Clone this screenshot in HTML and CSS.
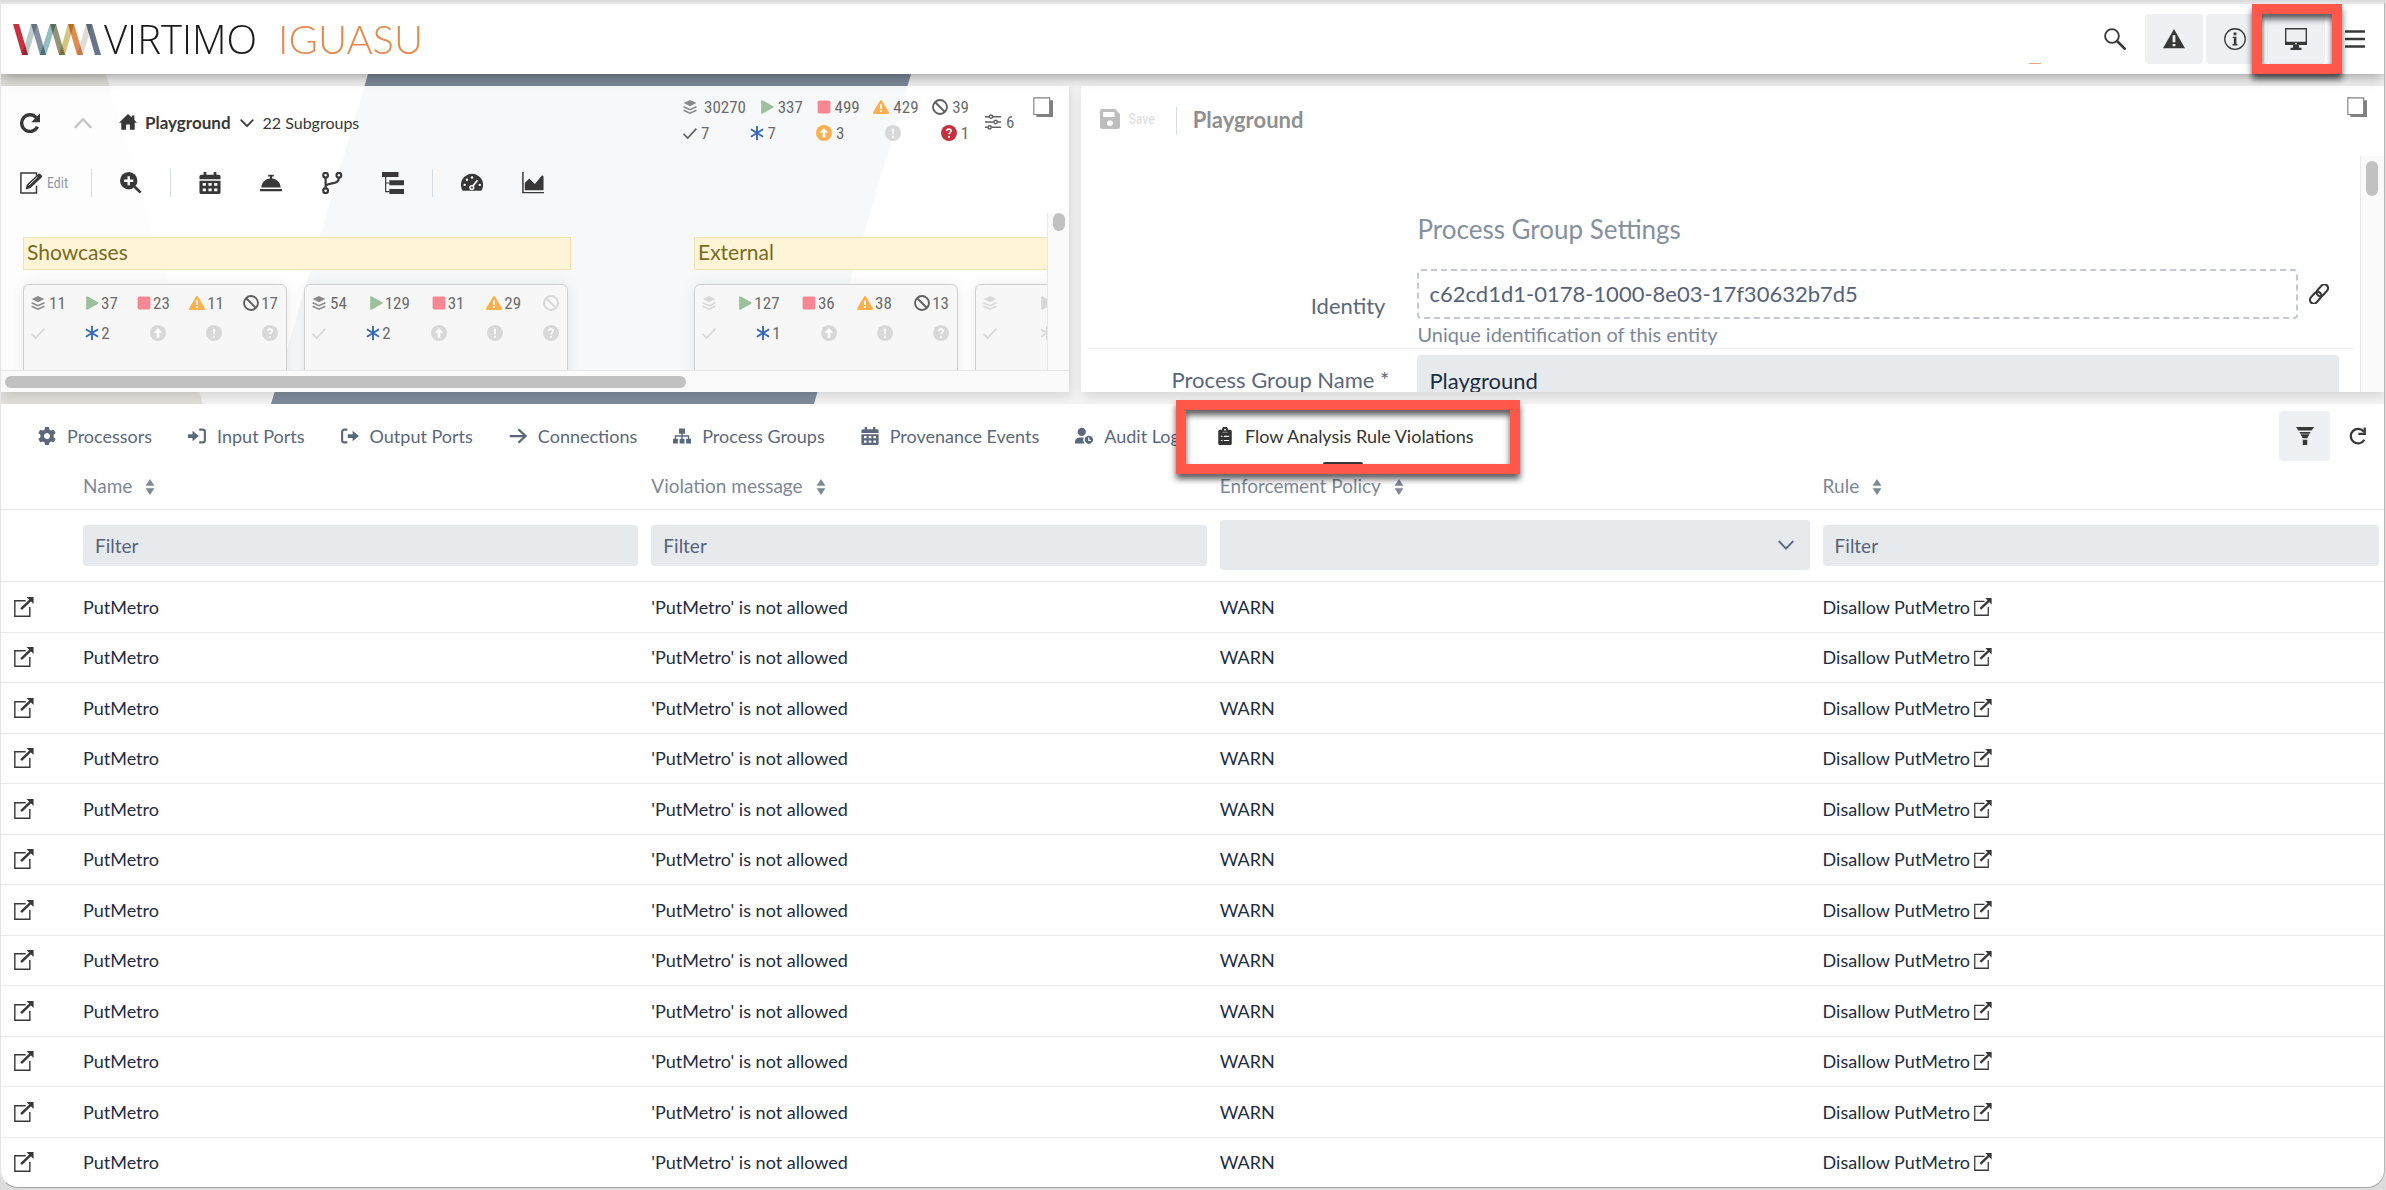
FILE: index.html
```html
<!DOCTYPE html>
<html lang="en">
<head>
<meta charset="utf-8">
<title>Virtimo IGUASU</title>
<link rel="stylesheet" href="styles.css">
</head>
<body>
<svg class="sprite" aria-hidden="true">
  <symbol id="i-refresh" viewBox="0 0 24 24"><path d="M21 16.500A10 10 0 1 1 19.500 5.500" fill="none" stroke="currentColor" stroke-width="4"/><path d="M24 .5v10.500H13.500l3.500-3.500 3.500-3.500z"/></symbol>
  <symbol id="i-refresh-thin" viewBox="0 0 24 24"><path d="M20.500 17A9.700 9.700 0 1 1 20 6.500" fill="none" stroke="currentColor" stroke-width="3"/><path d="M21 .5v8.500h-8.500" fill="none" stroke="currentColor" stroke-width="3"/></symbol>
  <symbol id="i-up" viewBox="0 0 24 24"><path d="M2 17.500 12 7l10 10.500" fill="none" stroke="currentColor" stroke-width="3" stroke-linecap="round"/></symbol>
  <symbol id="i-down" viewBox="0 0 24 24"><path d="M2 7l10 10.500L22 7" fill="none" stroke="currentColor" stroke-width="3" stroke-linecap="round" stroke-linejoin="round"/></symbol>
  <symbol id="i-home" viewBox="0 0 24 24"><path d="M12 0 0 11.500h3V21h6.500v-7h5v7H21v-9.500h3l-3.500-3.400V2H17v2.800z"/></symbol>
  <symbol id="i-edit" viewBox="0 0 24 24"><path d="M18 15v8H1V1h17v3" fill="none" stroke="currentColor" stroke-width="1.600"/><path d="M6 19l1.500-5.500L19.500 2.500c1-1 2-1 3 0l.8.8c1 1 1 2 0 3L11.500 17.500z"/><path d="M9.500 14.500 19 5.500" stroke="#fff" stroke-width="1"/></symbol>
  <symbol id="i-zoom" viewBox="0 0 24 24"><circle cx="9.500" cy="9.500" r="9.500"/><path d="M16 16l6.500 6.500" stroke="currentColor" stroke-width="3"/><path d="M9.500 4.500v10M4.500 9.500h10" stroke="#fff" stroke-width="2.600"/></symbol>
  <symbol id="i-calendar" viewBox="0 0 24 24"><path d="M5 0h3v3h8V0h3v3h2.500a2 2 0 0 1 2 2v3H.5V5a2 2 0 0 1 2-2H5z"/><path fill-rule="evenodd" d="M.5 9.500h23V22a2 2 0 0 1-2 2h-19a2 2 0 0 1-2-2zM4 12v3h3.500v-3zm6.300 0v3h3.500v-3zm6.200 0v3H20v-3zM4 18v3h3.500v-3zm6.300 0v3h3.500v-3zm6.200 0v3H20v-3z"/></symbol>
  <symbol id="i-bell" viewBox="0 0 24 24"><path d="M1.500 17C1.500 11 6 7.500 10.800 7V5H9V3h6v2h-1.800v2C18 7.500 22.500 11 22.500 17zM0 18.500h24V21H0z"/></symbol>
  <symbol id="i-branch" viewBox="0 0 24 24"><g fill="none" stroke="currentColor" stroke-width="2.400"><circle cx="5" cy="3.500" r="2.600"/><circle cx="5" cy="20.500" r="2.600"/><circle cx="19.500" cy="3.500" r="2.600"/><path d="M5 6v12M19.500 6c0 8-9 5-14 8.500"/></g></symbol>
  <symbol id="i-tree" viewBox="0 0 24 24"><path d="M0 0h18v5.500H0zM8 9h16v5.500H8zM8 18.500h16V24H8z"/><path d="M4 5v16.500h4M4 12h4" fill="none" stroke="currentColor" stroke-width="1.300"/></symbol>
  <symbol id="i-gauge" viewBox="0 0 24 24"><path d="M12 2a12 12 0 0 0-11 17c.4 1 1 1.500 2 1.500h18c1 0 1.600-.5 2-1.500A12 12 0 0 0 12 2z"/><path d="M12 16.500l6-7.500" stroke="#fff" stroke-width="1.800"/><circle cx="11.800" cy="17" r="2.800" fill="#fff"/><circle cx="11.800" cy="17" r="1.200"/><g fill="#fff"><circle cx="4" cy="14" r="1.300"/><circle cx="6.500" cy="8.500" r="1.300"/><circle cx="12" cy="6" r="1.300"/><circle cx="20.500" cy="14" r="1.300"/></g></symbol>
  <symbol id="i-chart" viewBox="0 0 24 24"><path d="M1 0v22.500h23" fill="none" stroke="currentColor" stroke-width="1.600"/><path d="M3 20v-8l5-5 6 6 8-9.500 1.500 1.500v15z"/></symbol>
  <symbol id="i-layers" viewBox="0 0 24 24"><path d="M12 0l11 5-11 5.500L1 5z"/><path d="M1 11.500l11 5 11-5M1 17.500l11 5 11-5" fill="none" stroke="currentColor" stroke-width="2.600"/></symbol>
  <symbol id="i-play" viewBox="0 0 24 24"><path d="M2 1.500c0-1 1-1.500 2-1l18.500 10.300c1 .6 1 1.800 0 2.400L4 23.500c-1 .5-2 0-2-1z"/></symbol>
  <symbol id="i-stop" viewBox="0 0 24 24"><rect x="1" y="1" width="22" height="22" rx="3"/></symbol>
  <symbol id="i-warn" viewBox="0 0 24 24"><path d="M10.400 2.500c.7-1.300 2.500-1.300 3.200 0l10 17c.8 1.300-.1 3-1.600 3H2c-1.500 0-2.400-1.700-1.600-3z"/><path d="M12 8v7M12 17v2.600" stroke="#fff" stroke-width="2.600"/></symbol>
  <symbol id="i-ban" viewBox="0 0 24 24"><circle cx="12" cy="12" r="10.500" fill="none" stroke="currentColor" stroke-width="2.800"/><path d="M4.500 4.500l15 15" stroke="currentColor" stroke-width="2.800"/></symbol>
  <symbol id="i-check" viewBox="0 0 24 24"><path d="M1 13.500l7 7L23 4.500" fill="none" stroke="currentColor" stroke-width="2.800"/></symbol>
  <symbol id="i-asterisk" viewBox="0 0 24 24"><path d="M12 0v24M1.500 5.500l21 13M22.500 5.500l-21 13" stroke="currentColor" stroke-width="3.200"/></symbol>
  <symbol id="i-arrowup" viewBox="0 0 24 24"><circle cx="12" cy="12" r="12"/><path d="M12 19v-9" stroke="#fff" stroke-width="4"/><path d="M12 4.500l6.500 7h-13z" fill="#fff"/></symbol>
  <symbol id="i-excl" viewBox="0 0 24 24"><circle cx="12" cy="12" r="12"/><path d="M12 5.500v8M12 16v3" stroke="#fff" stroke-width="2.800"/></symbol>
  <symbol id="i-quest" viewBox="0 0 24 24"><circle cx="12" cy="12" r="12"/><path d="M8.500 9c.3-4 7-3.500 6.800 0-.2 2.500-3.300 2.300-3.300 5" fill="none" stroke="#fff" stroke-width="2.400"/><path d="M12 16.500v2.800" stroke="#fff" stroke-width="2.800"/></symbol>
  <symbol id="i-sliders" viewBox="0 0 24 24"><path d="M0 4h6m6 0h12M0 12h13m6 0h5M0 20h4m6 0h14" stroke="currentColor" stroke-width="2.200"/><g fill="none" stroke="currentColor" stroke-width="2.200"><circle cx="9" cy="4" r="2.500"/><circle cx="16" cy="12" r="2.500"/><circle cx="7" cy="20" r="2.500"/></g></symbol>
  <symbol id="i-window" viewBox="0 0 24 24"><path d="M4 4h20v20H4z" fill="#808080"/><path d="M1 1h19v20H1z" fill="#fff" stroke="#808080" stroke-width="1.400"/></symbol>
  <symbol id="i-save" viewBox="0 0 24 24"><path fill-rule="evenodd" d="M3 0h15l6 6v15a3 3 0 0 1-3 3H3a3 3 0 0 1-3-3V3a3 3 0 0 1 3-3zm.8 3.500V9.500h13.700V3.500zM12 13.500a3.600 3.600 0 1 0 .01 0z"/></symbol>
  <symbol id="i-link" viewBox="0 0 24 24"><g fill="none" stroke="currentColor" stroke-width="2.600" transform="rotate(-48 12 12)"><rect x="-2" y="7.500" width="16" height="9" rx="4.500"/><rect x="10" y="7.500" width="16" height="9" rx="4.500"/></g></symbol>
  <symbol id="i-gear" viewBox="0 0 24 24"><path fill-rule="evenodd" d="M9.500 0h5l.7 3.500 2.300 1.300L21 3.600l2.500 4.300-2.700 2.400v3.400l2.700 2.400-2.500 4.300-3.500-1.200-2.300 1.300-.7 3.500h-5l-.7-3.500-2.300-1.300L3 20.400.5 16.100l2.700-2.400v-3.400L.5 7.900 3 3.600l3.500 1.200 2.300-1.300zM12 8a4 4 0 1 0 .01 0z"/></symbol>
  <symbol id="i-in" viewBox="0 0 24 24"><path d="M0 9.500h6V5l8.500 7L6 19v-4.500H0z"/><path d="M15 3.500h4.500a3 3 0 0 1 3 3v11a3 3 0 0 1-3 3H15" fill="none" stroke="currentColor" stroke-width="2.800"/></symbol>
  <symbol id="i-out" viewBox="0 0 24 24"><path d="M9 9.500h6.500V5l8.500 7-8.500 7v-4.500H9z"/><path d="M8.500 3.500H4.500a3 3 0 0 0-3 3v11a3 3 0 0 0 3 3h4" fill="none" stroke="currentColor" stroke-width="2.800"/></symbol>
  <symbol id="i-arrow" viewBox="0 0 24 24"><path d="M1 12h21M12.500 3l9.500 9-9.500 9" fill="none" stroke="currentColor" stroke-width="3"/></symbol>
  <symbol id="i-sitemap" viewBox="0 0 24 24"><path d="M8 2h8v7H8zM0 15.500h6.500V22H0zM8.800 15.500h6.500V22H8.800zM17.500 15.500H24V22h-6.500z"/><path d="M12 8v8M3.200 16v-4h17.600v4" fill="none" stroke="currentColor" stroke-width="1.800"/></symbol>
  <symbol id="i-audit" viewBox="0 0 24 24"><circle cx="9" cy="6.500" r="5.500"/><path d="M0 22v-2c0-4 3-6 6-6h5.500c-1 3-.5 6 1.500 8z"/><path fill-rule="evenodd" d="M18.500 11.500a5.500 5.500 0 1 0 .01 0zM17.600 14h1.600v3l2 .3v1.500h-3.600z"/></symbol>
  <symbol id="i-clip" viewBox="0 0 24 24"><path d="M8 3.500a4 4 0 0 1 8 0h3a2 2 0 0 1 2 2V22a2 2 0 0 1-2 2H5a2 2 0 0 1-2-2V5.500a2 2 0 0 1 2-2z"/><path d="M6.500 12.500h2m2 0h7M6.500 18h2m2 0h7" stroke="#fff" stroke-width="1.600"/><path d="M8.500 7h7" stroke="#aaa" stroke-width="1"/><circle cx="12" cy="3.500" r="1.200" fill="#fff"/></symbol>
  <symbol id="i-filter" viewBox="0 0 24 24"><path d="M0 0h24l-3.200 4.800H3.200zM4.400 6.500h15.200L18 9H6zM6 9.500h12l-3 5.500H9zM9 17h6v7H9z"/></symbol>
  <symbol id="i-ext" viewBox="0 0 24 24"><path d="M14 4.500H1V23h18V12" fill="none" stroke="currentColor" stroke-width="1.700"/><path d="M8.500 14.500 20 3.500" stroke="currentColor" stroke-width="3"/><path d="M15 0h8.500v8.500z"/></symbol>
  <symbol id="i-sort" viewBox="0 0 12 20"><path d="M6 0l5.500 8.500H.5zM6 20l5.500-8.500H.5z"/></symbol>
  <symbol id="i-search" viewBox="0 0 24 24"><circle cx="8.700" cy="8.700" r="7.500" fill="none" stroke="currentColor" stroke-width="2"/><path d="M14.500 14.500l8 8" stroke="currentColor" stroke-width="3" stroke-linecap="round"/></symbol>
  <symbol id="i-alert" viewBox="0 0 24 24"><path d="M12 1l12 21H0z"/><path d="M12 8v7.500M12 17.500V20" stroke="#eff0f4" stroke-width="3"/></symbol>
  <symbol id="i-info" viewBox="0 0 24 24"><circle cx="12" cy="12" r="11.200" fill="none" stroke="currentColor" stroke-width="1.400"/><path d="M10.500 5h3v3h-3zM9.500 9.500h4v8h1.200V19H9.300v-1.500h1.400V11H9.500z"/></symbol>
  <symbol id="i-monitor" viewBox="0 0 24 24"><path fill-rule="evenodd" d="M0 0h24v18.500h-9l.5 3H18V24H6v-2.500h2.500l.5-3H0zM1.500 1.500v13.500h21V1.500z"/><circle cx="12" cy="17" r="1" fill="#eff0f4"/></symbol>
  <symbol id="i-menu" viewBox="0 0 24 24"><path d="M1 3h22M1 12h22M1 21h22" stroke="currentColor" stroke-width="3" stroke-linecap="round"/></symbol>
</svg>

<div class="frame">
  <header class="topbar">
    <svg class="brand-mark" viewBox="0 0 88 31" aria-hidden="true">
      <path fill="#c8313f" d="M0 0h6l9 31H9z"/><path fill="#bccbce" d="M9 31h6L24 0h-6z"/><path fill="#8490a0" d="M18 0h6l9 31h-6z"/><path fill="#92bfbf" d="M27 31h6l10-31h-6z"/><path fill="#96917a" d="M37 0h6l9 31h-6z"/><path fill="#d2c77c" d="M46 31h6l9-31h-6z"/><path fill="#e28a52" d="M55 0h6l9 31h-6z"/><path fill="#dfdbd5" d="M64 31h6l9-31h-6z"/><path fill="#66758b" d="M73 0h6l9 31h-6z"/>
    </svg>
    <span class="brand-name">VIRTIMO</span>
    <span class="product-name">IGUASU</span>
    <span class="progress-hint"></span>
    <button class="plain-btn search-btn" aria-label="Search"><svg class="ic22"><use href="#i-search"/></svg></button>
    <div class="top-actions">
      <button class="tile-btn" aria-label="Alerts"><svg class="ic22"><use href="#i-alert"/></svg></button>
      <button class="tile-btn" aria-label="Information"><svg class="ic22"><use href="#i-info"/></svg></button>
      <button class="tile-btn marked" aria-label="Monitoring"><svg class="ic22"><use href="#i-monitor"/></svg><span class="marker marker-tile"></span></button>
    </div>
    <button class="plain-btn" aria-label="Menu"><svg class="ic20"><use href="#i-menu"/></svg></button>
  </header>

  <main class="workspace">
    <svg class="backdrop" width="920" height="330" viewBox="0 0 920 330" aria-hidden="true">
      <path fill="#e0dfd9" d="M0 0h105l97 330H0z"/><path fill="#7f8b9b" d="M367 0h543l-97 330H270z"/>
    </svg>

    <section class="flow-panel">
      <div class="flow-head">
        <div class="flow-tools">
          <nav class="crumbs">
            <button class="plain-btn" aria-label="Reload"><svg class="ic20"><use href="#i-refresh"/></svg></button>
            <button class="plain-btn faded up-btn" aria-label="Up"><svg class="ic18"><use href="#i-up"/></svg></button>
            <a class="crumb" href="#"><svg class="ic18"><use href="#i-home"/></svg>Playground</a>
            <button class="plain-btn crumb-more"><svg class="ic14"><use href="#i-down"/></svg>22 Subgroups</button>
          </nav>
          <div class="tools">
            <button class="plain-btn edit-btn"><svg class="ic22"><use href="#i-edit"/></svg><span>Edit</span></button>
            <span class="rule"></span>
            <button class="plain-btn" aria-label="Zoom in"><svg class="ic22"><use href="#i-zoom"/></svg></button>
            <span class="rule"></span>
            <div class="tool-set">
              <button class="plain-btn" aria-label="Calendar"><svg class="ic22"><use href="#i-calendar"/></svg></button>
              <button class="plain-btn" aria-label="Services"><svg class="ic22"><use href="#i-bell"/></svg></button>
              <button class="plain-btn" aria-label="Versions"><svg class="ic22"><use href="#i-branch"/></svg></button>
              <button class="plain-btn" aria-label="Hierarchy"><svg class="ic22"><use href="#i-tree"/></svg></button>
            </div>
            <span class="rule"></span>
            <div class="tool-set">
              <button class="plain-btn" aria-label="Gauge"><svg class="ic22"><use href="#i-gauge"/></svg></button>
              <button class="plain-btn" aria-label="Statistics"><svg class="ic22"><use href="#i-chart"/></svg></button>
            </div>
          </div>
        </div>
        <div class="summary">
          <div class="stats stats-wide">
            <div class="stat-row">
              <span class="stat spaced"><svg class="ic14 c-mid"><use href="#i-layers"/></svg>30270</span>
              <span class="stat"><svg class="ic14 c-green"><use href="#i-play"/></svg>337</span>
              <span class="stat"><svg class="ic14 c-pink"><use href="#i-stop"/></svg>499</span>
              <span class="stat"><svg class="ic16 c-amber"><use href="#i-warn"/></svg>429</span>
              <span class="stat"><svg class="ic16 c-dark"><use href="#i-ban"/></svg>39</span>
            </div>
            <div class="stat-row">
              <span class="stat"><svg class="ic14 c-dark"><use href="#i-check"/></svg>7</span>
              <span class="stat"><svg class="ic14 c-blue"><use href="#i-asterisk"/></svg>7</span>
              <span class="stat"><svg class="ic16 c-amber"><use href="#i-arrowup"/></svg>3</span>
              <span class="stat"><svg class="ic16 c-off"><use href="#i-excl"/></svg></span>
              <span class="stat"><svg class="ic16 c-red"><use href="#i-quest"/></svg>1</span>
            </div>
          </div>
          <span class="stat stat-side"><svg class="ic16 c-dark"><use href="#i-sliders"/></svg>6</span>
          <button class="plain-btn window-btn" aria-label="Detach flow"><svg class="ic20"><use href="#i-window"/></svg></button>
        </div>
      </div>
      <div class="flow-body">
        <div class="canvas">
          <div class="note note-a">Showcases</div>
          <div class="note note-b">External</div>
          <div class="group group-a stats">
            <div class="stat-row">
              <span class="stat spaced"><svg class="ic14 c-mid"><use href="#i-layers"/></svg>11</span>
              <span class="stat"><svg class="ic14 c-green"><use href="#i-play"/></svg>37</span>
              <span class="stat"><svg class="ic14 c-pink"><use href="#i-stop"/></svg>23</span>
              <span class="stat"><svg class="ic16 c-amber"><use href="#i-warn"/></svg>11</span>
              <span class="stat"><svg class="ic16 c-dark"><use href="#i-ban"/></svg>17</span>
            </div>
            <div class="stat-row">
              <span class="stat"><svg class="ic14 c-off"><use href="#i-check"/></svg></span>
              <span class="stat"><svg class="ic14 c-blue"><use href="#i-asterisk"/></svg>2</span>
              <span class="stat"><svg class="ic16 c-off"><use href="#i-arrowup"/></svg></span>
              <span class="stat"><svg class="ic16 c-off"><use href="#i-excl"/></svg></span>
              <span class="stat"><svg class="ic16 c-off"><use href="#i-quest"/></svg></span>
            </div>
          </div>
          <div class="group group-b stats">
            <div class="stat-row">
              <span class="stat spaced"><svg class="ic14 c-mid"><use href="#i-layers"/></svg>54</span>
              <span class="stat"><svg class="ic14 c-green"><use href="#i-play"/></svg>129</span>
              <span class="stat"><svg class="ic14 c-pink"><use href="#i-stop"/></svg>31</span>
              <span class="stat"><svg class="ic16 c-amber"><use href="#i-warn"/></svg>29</span>
              <span class="stat"><svg class="ic16 c-off"><use href="#i-ban"/></svg></span>
            </div>
            <div class="stat-row">
              <span class="stat"><svg class="ic14 c-off"><use href="#i-check"/></svg></span>
              <span class="stat"><svg class="ic14 c-blue"><use href="#i-asterisk"/></svg>2</span>
              <span class="stat"><svg class="ic16 c-off"><use href="#i-arrowup"/></svg></span>
              <span class="stat"><svg class="ic16 c-off"><use href="#i-excl"/></svg></span>
              <span class="stat"><svg class="ic16 c-off"><use href="#i-quest"/></svg></span>
            </div>
          </div>
          <div class="group group-c stats">
            <div class="stat-row">
              <span class="stat"><svg class="ic14 c-off"><use href="#i-layers"/></svg></span>
              <span class="stat"><svg class="ic14 c-green"><use href="#i-play"/></svg>127</span>
              <span class="stat"><svg class="ic14 c-pink"><use href="#i-stop"/></svg>36</span>
              <span class="stat"><svg class="ic16 c-amber"><use href="#i-warn"/></svg>38</span>
              <span class="stat"><svg class="ic16 c-dark"><use href="#i-ban"/></svg>13</span>
            </div>
            <div class="stat-row">
              <span class="stat"><svg class="ic14 c-off"><use href="#i-check"/></svg></span>
              <span class="stat"><svg class="ic14 c-blue"><use href="#i-asterisk"/></svg>1</span>
              <span class="stat"><svg class="ic16 c-off"><use href="#i-arrowup"/></svg></span>
              <span class="stat"><svg class="ic16 c-off"><use href="#i-excl"/></svg></span>
              <span class="stat"><svg class="ic16 c-off"><use href="#i-quest"/></svg></span>
            </div>
          </div>
          <div class="group group-d stats">
            <div class="stat-row">
              <span class="stat"><svg class="ic14 c-off"><use href="#i-layers"/></svg></span>
              <span class="stat"><svg class="ic14 c-off"><use href="#i-play"/></svg></span>
              <span class="stat"><svg class="ic14 c-off"><use href="#i-stop"/></svg></span>
              <span class="stat"><svg class="ic16 c-off"><use href="#i-warn"/></svg></span>
              <span class="stat"><svg class="ic16 c-off"><use href="#i-ban"/></svg></span>
            </div>
            <div class="stat-row">
              <span class="stat"><svg class="ic14 c-off"><use href="#i-check"/></svg></span>
              <span class="stat"><svg class="ic14 c-off"><use href="#i-asterisk"/></svg></span>
              <span class="stat"><svg class="ic16 c-off"><use href="#i-arrowup"/></svg></span>
              <span class="stat"><svg class="ic16 c-off"><use href="#i-excl"/></svg></span>
              <span class="stat"><svg class="ic16 c-off"><use href="#i-quest"/></svg></span>
            </div>
          </div>
        </div>
        <div class="vscroll"><span class="vthumb"></span></div>
        <div class="hscroll"><span class="hthumb"></span></div>
      </div>
    </section>

    <section class="settings-panel">
      <div class="settings-head">
        <button class="plain-btn save-btn" disabled><svg class="ic20"><use href="#i-save"/></svg><span>Save</span></button>
        <span class="rule"></span>
        <h2 class="settings-title">Playground</h2>
        <button class="plain-btn window-btn push" aria-label="Detach settings"><svg class="ic20"><use href="#i-window"/></svg></button>
      </div>
      <div class="settings-body">
        <form class="form">
          <h3 class="form-heading">Process Group Settings</h3>
          <div class="form-row">
            <label class="form-label" for="identity">Identity</label>
            <div class="form-field">
              <div class="field-line">
                <input class="identity-input" id="identity" readonly value="c62cd1d1-0178-1000-8e03-17f30632b7d5">
                <button type="button" class="plain-btn" aria-label="Copy link"><svg class="ic20"><use href="#i-link"/></svg></button>
              </div>
              <p class="hint">Unique identification of this entity</p>
            </div>
          </div>
          <div class="form-row bordered">
            <label class="form-label" for="group-name">Process Group Name *</label>
            <div class="form-field"><input class="name-input" id="group-name" value="Playground"></div>
          </div>
        </form>
        <div class="vscroll"><span class="vthumb vthumb-long"></span></div>
      </div>
    </section>
  </main>

  <section class="monitor">
    <div class="monitor-head">
      <nav class="tabs">
        <a class="tab" href="#"><svg class="ic18"><use href="#i-gear"/></svg>Processors</a>
        <a class="tab" href="#"><svg class="ic18"><use href="#i-in"/></svg>Input Ports</a>
        <a class="tab" href="#"><svg class="ic18"><use href="#i-out"/></svg>Output Ports</a>
        <a class="tab" href="#"><svg class="ic18"><use href="#i-arrow"/></svg>Connections</a>
        <a class="tab" href="#"><svg class="ic18"><use href="#i-sitemap"/></svg>Process Groups</a>
        <a class="tab" href="#"><svg class="ic18"><use href="#i-calendar"/></svg>Provenance Events</a>
        <a class="tab" href="#"><svg class="ic18"><use href="#i-audit"/></svg>Audit Log</a>
        <a class="tab active marked" href="#"><svg class="ic18"><use href="#i-clip"/></svg>Flow Analysis Rule Violations<span class="marker marker-tab"></span></a>
      </nav>
      <div class="monitor-actions">
        <button class="tile-btn tile-narrow" aria-label="Filter"><svg class="ic18"><use href="#i-filter"/></svg></button>
        <button class="plain-btn" aria-label="Reload table"><svg class="ic18"><use href="#i-refresh-thin"/></svg></button>
      </div>
    </div>
    <table class="grid">
      <colgroup><col class="col-open"><col><col><col class="col-policy"><col></colgroup>
      <thead>
        <tr class="head-row">
          <th></th>
          <th scope="col">Name<svg class="sort"><use href="#i-sort"/></svg></th>
          <th scope="col">Violation message<svg class="sort"><use href="#i-sort"/></svg></th>
          <th scope="col">Enforcement Policy<svg class="sort"><use href="#i-sort"/></svg></th>
          <th scope="col">Rule<svg class="sort"><use href="#i-sort"/></svg></th>
        </tr>
        <tr class="filter-row">
          <td></td>
          <td><input class="filter" placeholder="Filter" aria-label="Filter name"></td>
          <td><input class="filter" placeholder="Filter" aria-label="Filter violation message"></td>
          <td><div class="select-wrap"><select class="policy" aria-label="Enforcement policy"><option></option></select><svg class="ic16"><use href="#i-down"/></svg></div></td>
          <td><input class="filter" placeholder="Filter" aria-label="Filter rule"></td>
        </tr>
      </thead>
      <tbody>
        <tr><td><a href="#" aria-label="Open"><svg class="ic20"><use href="#i-ext"/></svg></a></td><td>PutMetro</td><td>'PutMetro' is not allowed</td><td>WARN</td><td><a class="rule-link" href="#">Disallow PutMetro<svg class="ic18"><use href="#i-ext"/></svg></a></td></tr>
        <tr><td><a href="#" aria-label="Open"><svg class="ic20"><use href="#i-ext"/></svg></a></td><td>PutMetro</td><td>'PutMetro' is not allowed</td><td>WARN</td><td><a class="rule-link" href="#">Disallow PutMetro<svg class="ic18"><use href="#i-ext"/></svg></a></td></tr>
        <tr><td><a href="#" aria-label="Open"><svg class="ic20"><use href="#i-ext"/></svg></a></td><td>PutMetro</td><td>'PutMetro' is not allowed</td><td>WARN</td><td><a class="rule-link" href="#">Disallow PutMetro<svg class="ic18"><use href="#i-ext"/></svg></a></td></tr>
        <tr><td><a href="#" aria-label="Open"><svg class="ic20"><use href="#i-ext"/></svg></a></td><td>PutMetro</td><td>'PutMetro' is not allowed</td><td>WARN</td><td><a class="rule-link" href="#">Disallow PutMetro<svg class="ic18"><use href="#i-ext"/></svg></a></td></tr>
        <tr><td><a href="#" aria-label="Open"><svg class="ic20"><use href="#i-ext"/></svg></a></td><td>PutMetro</td><td>'PutMetro' is not allowed</td><td>WARN</td><td><a class="rule-link" href="#">Disallow PutMetro<svg class="ic18"><use href="#i-ext"/></svg></a></td></tr>
        <tr><td><a href="#" aria-label="Open"><svg class="ic20"><use href="#i-ext"/></svg></a></td><td>PutMetro</td><td>'PutMetro' is not allowed</td><td>WARN</td><td><a class="rule-link" href="#">Disallow PutMetro<svg class="ic18"><use href="#i-ext"/></svg></a></td></tr>
        <tr><td><a href="#" aria-label="Open"><svg class="ic20"><use href="#i-ext"/></svg></a></td><td>PutMetro</td><td>'PutMetro' is not allowed</td><td>WARN</td><td><a class="rule-link" href="#">Disallow PutMetro<svg class="ic18"><use href="#i-ext"/></svg></a></td></tr>
        <tr><td><a href="#" aria-label="Open"><svg class="ic20"><use href="#i-ext"/></svg></a></td><td>PutMetro</td><td>'PutMetro' is not allowed</td><td>WARN</td><td><a class="rule-link" href="#">Disallow PutMetro<svg class="ic18"><use href="#i-ext"/></svg></a></td></tr>
        <tr><td><a href="#" aria-label="Open"><svg class="ic20"><use href="#i-ext"/></svg></a></td><td>PutMetro</td><td>'PutMetro' is not allowed</td><td>WARN</td><td><a class="rule-link" href="#">Disallow PutMetro<svg class="ic18"><use href="#i-ext"/></svg></a></td></tr>
        <tr><td><a href="#" aria-label="Open"><svg class="ic20"><use href="#i-ext"/></svg></a></td><td>PutMetro</td><td>'PutMetro' is not allowed</td><td>WARN</td><td><a class="rule-link" href="#">Disallow PutMetro<svg class="ic18"><use href="#i-ext"/></svg></a></td></tr>
        <tr><td><a href="#" aria-label="Open"><svg class="ic20"><use href="#i-ext"/></svg></a></td><td>PutMetro</td><td>'PutMetro' is not allowed</td><td>WARN</td><td><a class="rule-link" href="#">Disallow PutMetro<svg class="ic18"><use href="#i-ext"/></svg></a></td></tr>
        <tr><td><a href="#" aria-label="Open"><svg class="ic20"><use href="#i-ext"/></svg></a></td><td>PutMetro</td><td>'PutMetro' is not allowed</td><td>WARN</td><td><a class="rule-link" href="#">Disallow PutMetro<svg class="ic18"><use href="#i-ext"/></svg></a></td></tr>
      </tbody>
    </table>
  </section>
</div>
</body>
</html>
```
FILE: styles.css
```css
* { box-sizing: border-box; }
body {
  margin: 0;
  padding: 2px 1px 0 0;
  background: #dcdcdc;
  color: #1e2c42;
  font: 18px/24px Lato, sans-serif;
}
.sprite { display: none; }
svg { fill: currentColor; flex: none; display: block; }
a { color: inherit; text-decoration: none; }
input, select, button { font: inherit; color: inherit; }

.ic14 { width: 14px; height: 14px; }
.ic16 { width: 16px; height: 16px; }
.ic18 { width: 18px; height: 18px; }
.ic20 { width: 20px; height: 20px; }
.ic22 { width: 22px; height: 22px; }

.c-mid { color: #8a8a8a; }
.c-dark { color: #5f5f5f; }
.c-green { color: #9cc09b; }
.c-pink { color: #f78793; }
.c-amber { color: #ffb04e; }
.c-blue { color: #3568b8; }
.c-red { color: #c62f3e; }
.c-off { color: #d8d8d8; }

.frame {
  border: solid #e5e5e5;
  border-width: 2px 0 0 1px;
  border-right: 1px solid #b5b5b5;
  border-bottom: 1px solid #a5a5a5;
  border-radius: 0 0 18px 18px;
  background: #fff;
  overflow: hidden;
}

.plain-btn {
  display: flex;
  align-items: center;
  padding: 0;
  border: 0;
  background: none;
  color: #383838;
}
.tile-btn {
  display: flex;
  align-items: center;
  justify-content: center;
  width: 58px;
  height: 50px;
  padding: 0;
  border: 0;
  border-radius: 4px;
  background: #eff0f4;
  color: #383838;
}
.tile-narrow { width: 51px; }
.rule { width: 1px; height: 28px; background: #d5dbe3; }

/* Red call-out frames */
.marked { position: relative; }
.marker {
  position: absolute;
  z-index: 5;
  border: 10px solid #ff584a;
  filter: drop-shadow(0 5px 3px rgba(0, 0, 0, .65));
  pointer-events: none;
}
.marker-tile { inset: -10px -17px -10px -15px; }
.marker-tab { inset: -4px -28px -8px -22px; }

/* Top bar */
.topbar {
  position: relative;
  z-index: 2;
  display: flex;
  align-items: center;
  height: 70px;
  padding: 0 19px 0 12px;
  background: #fff;
  box-shadow: 0 3px 12px rgba(0, 0, 0, .35);
}
.brand-mark { width: 88px; height: 31px; }
.brand-mark path { mix-blend-mode: multiply; }
.brand-name {
  margin-left: 3px;
  color: #1a1a1a;
  font: 300 40px/50px "Open Sans", sans-serif;
}
.product-name {
  margin-left: 21px;
  color: #e58a4c;
  font: 300 40px/50px Lato, sans-serif;
}
.progress-hint {
  align-self: flex-end;
  width: 12px;
  height: 1px;
  margin: 0 63px 10px auto;
  background: #e9a57c;
}
.search-btn { margin-right: 19px; }
.top-actions { display: flex; gap: 3px; margin-right: 20px; }

/* Workspace */
.workspace {
  position: relative;
  display: grid;
  grid-template-columns: 1068fr 1302fr;
  gap: 12px;
  padding: 12px 0;
  background: #f3f3f3;
}
.backdrop { position: absolute; left: 0; top: 0; }
.flow-panel, .settings-panel {
  position: relative;
  display: flex;
  flex-direction: column;
  height: 306px;
  min-width: 0;
  background: #fff;
  box-shadow: 2px 4px 10px rgba(0, 0, 0, .12);
}
.flow-panel { background: rgba(255, 255, 255, .94); }

.flow-head { display: flex; justify-content: space-between; height: 127px; padding: 9px 16px 0 19px; }
.flow-tools { padding-top: 16px; color: #383838; }
.crumbs { display: flex; align-items: center; height: 24px; }
.up-btn { margin: 0 27px 0 34px; }
.faded { color: #c4c4c4; }
.crumb { display: flex; align-items: center; gap: 8px; font-size: 17px; font-weight: 700; }
.crumb-more { gap: 9px; margin-left: 9px; font-size: 16px; }
.tools { display: flex; align-items: center; gap: 28px; height: 28px; margin-top: 34px; }
.edit-btn { gap: 5px; margin-right: -5px; }
.edit-btn span { color: #8d99aa; font: 14px/20px "Roboto Condensed", "Liberation Sans Narrow", Roboto, sans-serif; }
.tool-set { display: flex; gap: 39px; }

.summary { display: flex; align-items: flex-start; }
.stats, .stat-side {
  color: #6b6b6b;
  font: 17px/20px "Roboto Condensed", "Liberation Sans Narrow", Roboto, sans-serif;
}
.stats-wide { width: 286px; padding-top: 2px; }
.stat-row { display: flex; align-items: center; justify-content: space-between; height: 20px; }
.stats-wide .stat-row + .stat-row { margin-top: 6px; }
.stat { display: flex; align-items: center; gap: 2px; }
.stats-wide .stat { gap: 4px; }
.stat.spaced { gap: 4px; }
.stats-wide .spaced { gap: 7px; }
.stat-side { gap: 5px; margin: 17px 19px 0 16px; }
.window-btn { margin-top: 2px; }

.flow-body {
  flex: 1;
  display: grid;
  grid-template: 1fr 22px / 1fr 22px;
  min-height: 0;
}
.canvas { position: relative; overflow: hidden; }
.vscroll { display: flex; justify-content: center; border-left: 1px solid #e8e8e8; background: #fafafa; }
.hscroll { grid-column: 1 / 3; display: flex; align-items: center; padding-left: 4px; border-top: 1px solid #e8e8e8; background: #fafafa; }
.vthumb { width: 12px; height: 18px; border-radius: 6px; background: #c1c1c1; }
.vthumb-long { height: 35px; margin-top: 5px; }
.hthumb { width: 64%; height: 12px; border-radius: 6px; background: #c1c1c1; }

.note {
  position: absolute;
  top: 24px;
  width: 548px;
  height: 33px;
  padding: 0 3px;
  border: 1px solid #f0e2b2;
  background: #fff5d6;
  color: #7a6a22;
  font-size: 21px;
  line-height: 27px;
}
.note-a { left: 22px; }
.note-b { left: 693px; }
.group {
  position: absolute;
  top: 71px;
  width: 264px;
  height: 160px;
  padding: 8px 8px 8px 7px;
  border: 1px solid #cfcfcf;
  border-radius: 6px;
  background: #f7f7f7;
  box-shadow: 0 0 14px rgba(0, 0, 0, .08);
}
.group .stat-row + .stat-row { margin-top: 10px; }
.group-a { left: 22px; }
.group-b { left: 303px; }
.group-c { left: 693px; }
.group-d { left: 974px; }

/* Settings */
.settings-head { display: flex; align-items: flex-start; height: 70px; padding: 9px 17px 0 19px; }
.settings-head .rule { margin: 12px 16px 0 21px; }
.save-btn { gap: 8px; height: 28px; margin-top: 10px; color: #bdbdbd; }
.save-btn span { color: #dcdcdc; font: 14px/20px "Roboto Condensed", "Liberation Sans Narrow", Roboto, sans-serif; }
.settings-title { margin: 11px 0 0; color: #8f8f8f; font-size: 22px; line-height: 28px; }
.push { margin-left: auto; }
.settings-body { flex: 1; display: grid; grid-template-columns: 1fr 24px; min-height: 0; overflow: hidden; }
.form { padding: 0 6px; overflow: hidden; }
.form-heading {
  margin: 55px 0 22px 330px;
  color: #8490a0;
  font-size: 26px;
  font-weight: 400;
  line-height: 36px;
}
.form-row { display: grid; grid-template-columns: 302px 1fr; gap: 28px; padding-right: 15px; }
.bordered { padding-top: 6px; border-top: 1px solid #eceef0; }
.form-label { color: #5b677b; font-size: 22px; line-height: 50px; text-align: right; }
.form-field { min-width: 0; }
.form-row:not(.bordered) .form-label { padding: 12px 4px 0 0; }
.field-line { display: flex; align-items: center; gap: 11px; padding-right: 10px; }
.identity-input, .name-input {
  flex: 1;
  width: 100%;
  height: 50px;
  padding: 0 12px;
  border: 2px dashed #c3c8d8;
  border-radius: 4px;
  background: #fff;
  color: #56627a;
  font-size: 22px;
}
.identity-input { padding: 0 10px 2px; }
.name-input { border: 0; background: #e6eaed; color: #1e2c42; }
.hint { margin: 3px 0 2px; color: #7d8899; font-size: 20px; line-height: 24px; }

/* Monitoring table */
.monitor-head { display: flex; justify-content: space-between; height: 62px; padding-right: 17px; }
.tabs { display: flex; padding-left: 19px; }
.tab { display: flex; align-items: center; gap: 11px; padding: 2px 18px 0; color: #5b677b; white-space: nowrap; }
.active { color: #333; }
.active::before {
  content: "";
  position: absolute;
  left: 50%;
  bottom: 0;
  width: 40px;
  height: 4px;
  margin-left: -22px;
  border-radius: 2px 2px 0 0;
  background: #383838;
}
.monitor-actions { display: flex; align-items: center; gap: 19px; padding-top: 1px; }

.grid { width: 100%; border-collapse: collapse; table-layout: fixed; }
.col-open { width: 75px; }
.col-policy { width: 25.3%; }
.grid th, .grid td { padding: 0 6px 0 7px; text-align: left; border-bottom: 1px solid #e8ecf1; }
.grid td:first-child { padding-left: 13px; }
.grid td:last-child { padding-right: 5px; }
.grid .head-row th { height: 43px; padding-bottom: 3px; color: #7d8899; font-size: 19px; font-weight: 400; }
.sort { display: inline-block; width: 12px; height: 16px; margin-left: 12px; vertical-align: -2px; }
.filter-row td { height: 72px; }
.filter {
  display: block;
  width: 100%;
  height: 41px;
  padding: 0 12px;
  border: 0;
  border-radius: 4px;
  background: #e6eaed;
  font-size: 19px;
}
.filter::placeholder { color: #56627a; opacity: 1; }
.select-wrap { display: grid; align-items: center; }
.select-wrap > * { grid-area: 1 / 1; }
.select-wrap svg { justify-self: end; margin-right: 16px; color: #5b677b; }
.policy { width: 100%; height: 50px; border: 0; border-radius: 4px; background: #e6eaed; appearance: none; }
.grid tbody td { height: 50px; }
.grid tbody tr:nth-child(odd) td { height: 51px; }
.grid tbody tr:last-child td { border-bottom: 0; }
.grid tbody svg { color: #383838; }
.rule-link { display: flex; align-items: center; gap: 4px; }
```
